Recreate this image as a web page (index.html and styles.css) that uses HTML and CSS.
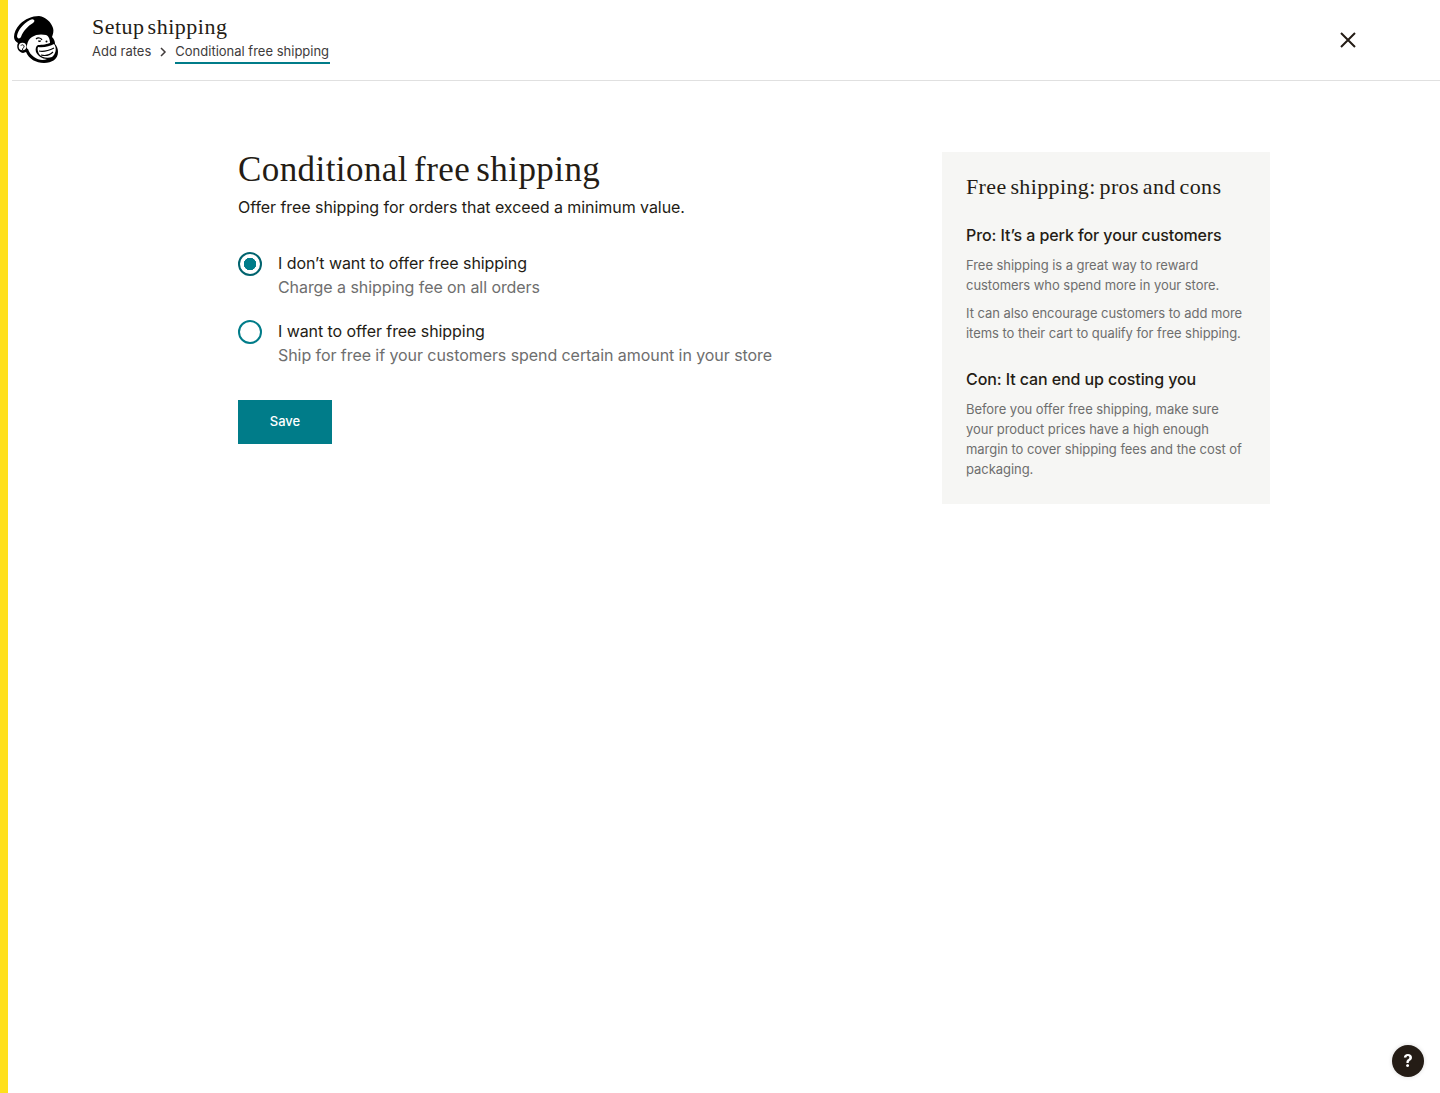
FILE: index.html
```html
<!DOCTYPE html>
<html lang="en">
<head>
<meta charset="utf-8">
<title>Setup shipping</title>
<link rel="stylesheet" href="styles.css">
</head>
<body>
<div class="page">
  <header class="topbar">
    <svg class="logo" viewBox="0 0 46 48" aria-label="Mailchimp logo">
      <path class="ink" d="M25 0C18 0 11 3 6 8C2 12 0 17 0 21C0 24 2 26 4 27C2 31 4 36 9 37C10 37 11 36 12 36C15 43 22 47 30 47C38 47 44 43 44 36C44 33 43 30 41 28C41 25 40 23 38 21C39 18 40 15 39 12C37 6 32 1 25 0Z"/>
      <path class="paper" d="M3 20C4 14 9 8 16 4C18 3 19 3 20 4C21 5 20 6 19 7C14 10 9 15 7 21C6 23 3 23 3 20Z"/>
      <path class="paper" d="M18 21C22 18 28 18 32 19C35 20 36 24 36 27C34 28 28 29 24 29C22 30 21 33 22 36C24 40 28 43 33 43C29 45 24 44 20 41C17 39 15 36 14 33C13 33 12 31 13 29C14 25 15 23 18 21Z"/>
      <path class="line" d="M22 23C24 21 27 22 28 24"/>
      <path class="ink" d="M24 24.500a1.500 1.500 0 1 0 3 0z"/>
      <circle class="ink" cx="32.500" cy="25.500" r="1"/>
      <path class="paper" d="M24 31C30 32 36 30 40 28C43 32 42 38 38 41C33 43 27 41 25 38C24 36 23 33 24 31Z"/>
      <path class="line" d="M25 35C30 36 36 34 40 32"/>
      <path class="line" d="M27 39C31 40 36 39 39 36"/>
      <circle class="paper" cx="8.500" cy="30.500" r="3.800"/>
      <path class="line thin" d="M7 29.500C8 28 10.500 29 10 31C9.500 32 8.500 32 8.500 34"/>
    </svg>
    <div class="steps">
      <div class="steps-title">Setup shipping</div>
      <nav class="crumbs">
        <span>Add rates</span>
        <svg class="chev" viewBox="0 0 8 10"><path d="M2 1l4 4-4 4"/></svg>
        <span class="crumb-active">Conditional free shipping</span>
      </nav>
    </div>
    <svg class="close" viewBox="0 0 16 16" aria-label="Close"><path d="M1 1l14 14M15 1L1 15"/></svg>
  </header>
  <main class="content">
    <section class="form">
      <h1>Conditional free shipping</h1>
      <p class="lead">Offer free shipping for orders that exceed a minimum value.</p>
      <div class="option">
        <span class="radio radio-on"></span>
        <div>
          <div class="opt-label">I don’t want to offer free shipping</div>
          <div class="opt-help">Charge a shipping fee on all orders</div>
        </div>
      </div>
      <div class="option">
        <span class="radio"></span>
        <div>
          <div class="opt-label">I want to offer free shipping</div>
          <div class="opt-help">Ship for free if your customers spend certain amount in your store</div>
        </div>
      </div>
      <button class="save">Save</button>
    </section>
    <aside class="tips">
      <h2>Free shipping: pros and cons</h2>
      <h3>Pro: It’s a perk for your customers</h3>
      <p>Free shipping is a great way to reward customers who spend more in your store.</p>
      <p>It can also encourage customers to add more items to their cart to qualify for free shipping.</p>
      <h3 class="second">Con: It can end up costing you</h3>
      <p>Before you offer free shipping, make sure your product prices have a high enough margin to cover shipping fees and the cost of packaging.</p>
    </aside>
  </main>
</div>
<button class="help">?</button>
</body>
</html>
```
FILE: styles.css
```css
* { box-sizing: border-box; }
html, body { margin: 0; height: 100%; }
body {
  background: #fff;
  color: #241c15;
  font-family: Inter, "Liberation Sans", sans-serif;
  border-left: 8px solid #ffe01b;
  min-height: 1093px;
}
.page { padding-left: 4px; }
.topbar {
  height: 81px;
  border-bottom: 1px solid #e0e0e0;
  display: flex;
  align-items: center;
  padding-left: 2px;
  padding-right: 84px;
}
.logo { width: 46px; height: 48px; flex: none; }
.ink { fill: #000; }
.paper { fill: #fff; }
.line { fill: none; stroke: #000; stroke-width: 1.2; }
.line.thin { stroke-width: 1; }
.steps { margin-left: 32px; flex: 1; padding-bottom: 3px; }
.steps-title {
  font-family: "Liberation Serif", serif;
  font-size: 22px;
  letter-spacing: .5px;
  word-spacing: -3px;
  line-height: 26px;
  margin-bottom: 1px;
}
.crumbs {
  display: flex;
  align-items: flex-start;
  font-size: 13px;
  line-height: 20px;
  color: #403b3b;
}
.chev { width: 8px; height: 10px; margin: 6px 8px 0 8px; }
.chev path { fill: none; stroke: #403b3b; stroke-width: 1.5; }
.crumb-active { border-bottom: 2px solid #007c89; padding: 0 1px 1px 0; }
.close { width: 16px; height: 16px; }
.close path { fill: none; stroke: #241c15; stroke-width: 2; }
.content {
  display: flex;
  padding: 71px 0 0 226px;
}
.form { width: 704px; flex: none; }
h1 {
  margin: 0;
  font-family: "Liberation Serif", serif;
  font-weight: 400;
  font-size: 35px;
  letter-spacing: .42px;
  word-spacing: -3px;
  line-height: 36px;
}
.lead { margin: 7px 0 0; font-size: 16px; line-height: 24px; letter-spacing: -.06px; }
.option { display: flex; gap: 16px; margin-top: 20px; }
.option + .option { margin-top: 20px; }
.lead + .option { margin-top: 32px; }
.radio {
  width: 24px; height: 24px;
  margin-top: 1px;
  border-radius: 50%;
  border: 2px solid #007c89;
  flex: none;
}
.radio-on {
  border-color: #00636e;
  background: radial-gradient(circle, #007c89 0 6px, #fff 6.5px);
}
.opt-label { font-size: 16px; line-height: 24px; letter-spacing: -.07px; }
.opt-help { font-size: 16px; line-height: 24px; letter-spacing: -.07px; color: #6e6e6e; }
.save {
  display: block;
  margin-top: 33px;
  width: 94px; height: 44px;
  padding: 0 0 2px;
  border: 0;
  background: #007c89;
  color: #fff;
  font: 500 13px Inter, sans-serif;
}
.tips {
  width: 328px;
  height: 352px;
  background: #f6f6f4;
  padding: 23px 24px;
}
.tips h2 {
  margin: 0 0 24px;
  font-family: "Liberation Serif", serif;
  font-weight: 400;
  font-size: 22px;
  letter-spacing: .37px;
  word-spacing: -2px;
  line-height: 24px;
}
.tips h3 { margin: 0 0 8px; font-size: 16px; line-height: 24px; font-weight: 500; letter-spacing: -.09px; }
.tips h3.second { margin-top: 24px; }
.tips p { margin: 0 0 8px; font-size: 13px; line-height: 20px; letter-spacing: -.05px; color: #6e6e6e; }
.help {
  position: fixed;
  right: 16px; bottom: 16px;
  width: 32px; height: 32px;
  border-radius: 50%;
  border: 0;
  background: #241c15;
  color: #fff;
  font: 700 17px Inter, sans-serif;
  box-shadow: 0 0 4px rgba(0,0,0,.15);
}
```
